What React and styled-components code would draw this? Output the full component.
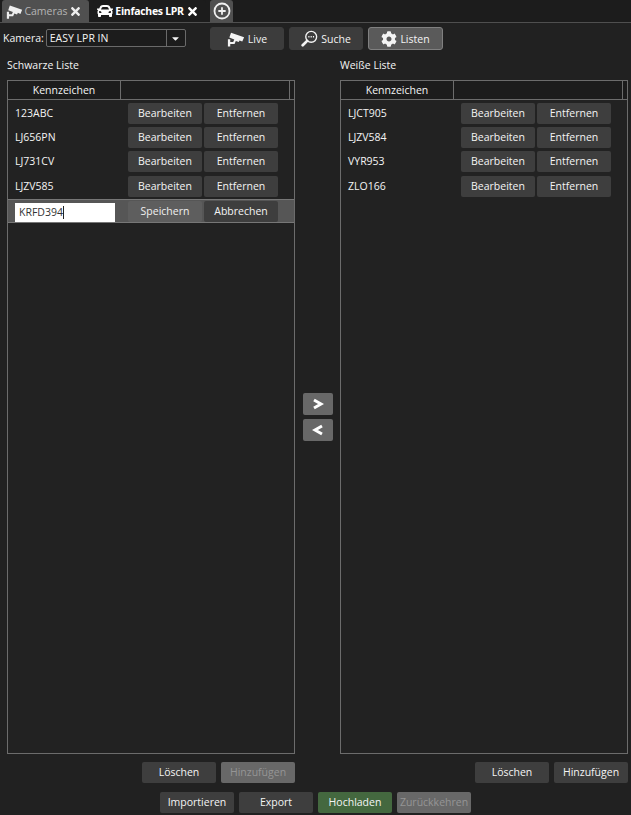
import React from 'react';
import styled, { createGlobalStyle } from 'styled-components';
import { FaCar, FaCog, FaTimes, FaCaretDown } from 'react-icons/fa';
import { CirclePlus } from 'lucide-react';

const GlobalStyle = createGlobalStyle`
  html, body {
    margin: 0;
    padding: 0;
    background: #212121;
  }
  body {
    font-family: 'Open Sans', 'Noto Sans', sans-serif;
    font-size: 10.5px;
    color: #f4f4f4;
  }
  * {
    box-sizing: border-box;
  }
`;

const CameraIcon = ({ size = 18 }) => (
  <svg width={size} height={size} viewBox='0 0 20 20' fill='currentColor'>
    <path d='M4.5 3 L19 8 L17 12.8 L14 11.6 L13 13.4 L9.8 12.3 L8.4 15.6 L3.6 15.6 L3.6 18.4 L1 18.4 L1 10.2 L3.6 10.2 L3.6 13.2 L6.9 13.2 L8.1 10.6 L2.6 8.4 Z' />
  </svg>
);

const SearchIcon = ({ size = 17 }) => (
  <svg width={size} height={size} viewBox='0 0 20 20' fill='none' stroke='currentColor'>
    <circle cx='12' cy='8' r='6.4' strokeWidth='1.6' />
    <path d='M7.2 12.8 L2 18' strokeWidth='3.2' strokeLinecap='round' />
    <path d='M8.6 8 H15.4' strokeWidth='1.8' strokeDasharray='1.4 1.3' />
  </svg>
);

const blackList = ['123ABC', 'LJ656PN', 'LJ731CV', 'LJZV585'];
const whiteList = ['LJCT905', 'LJZV584', 'VYR953', 'ZLO166'];

const ListPanel = ({ title, plates, editing, addDisabled }) => (
  <Column>
    <ColumnTitle>{title}</ColumnTitle>
    <Panel>
      <PanelHeader>
        <HeaderCell>Kennzeichen</HeaderCell>
        <HeaderFill />
        <HeaderStub />
      </PanelHeader>
      <Rows>
        {plates.map((plate) => (
          <Row key={plate}>
            <Plate>{plate}</Plate>
            <RowButtons>
              <Button>Bearbeiten</Button>
              <Button>Entfernen</Button>
            </RowButtons>
          </Row>
        ))}
        {editing && (
          <EditRow>
            <PlateInput>
              {editing}
              <Caret />
            </PlateInput>
            <RowButtons>
              <Button $variant='soft'>Speichern</Button>
              <Button>Abbrechen</Button>
            </RowButtons>
          </EditRow>
        )}
      </Rows>
    </Panel>
    <PanelFooter>
      <Button>Löschen</Button>
      <Button $variant={addDisabled ? 'disabled' : undefined}>Hinzufügen</Button>
    </PanelFooter>
  </Column>
);

const App = () => (
  <Page>
    <GlobalStyle />
    <TabBar>
      <Tab $width={87}>
        <CameraIcon size={17} />
        <TabLabel>Cameras</TabLabel>
        <FaTimes size={13} />
      </Tab>
      <Tab $active $width={113}>
        <FaCar size={16} />
        <TabLabel>Einfaches LPR</TabLabel>
        <FaTimes size={13} />
      </Tab>
      <AddTab>
        <CirclePlus size={18} strokeWidth={2.4} />
      </AddTab>
    </TabBar>

    <Toolbar>
      <CameraField>
        <span>Kamera:</span>
        <Select>
          <SelectValue>EASY LPR IN</SelectValue>
          <SelectArrow>
            <FaCaretDown size={11} />
          </SelectArrow>
        </Select>
      </CameraField>
      <ViewButtons>
        <ViewButton>
          <CameraIcon />
          Live
        </ViewButton>
        <ViewButton>
          <SearchIcon />
          Suche
        </ViewButton>
        <ViewButton $active>
          <FaCog size={16} />
          Listen
        </ViewButton>
      </ViewButtons>
    </Toolbar>

    <Lists>
      <ListPanel title='Schwarze Liste' plates={blackList} editing='KRFD394' addDisabled />
      <Transfer>
        <ArrowButton aria-label='nach rechts'>
          <Chevron viewBox='0 0 12 12'>
            <path d='M2 2 L9 6 L2 10' />
          </Chevron>
        </ArrowButton>
        <ArrowButton aria-label='nach links'>
          <Chevron viewBox='0 0 12 12'>
            <path d='M10 2 L3 6 L10 10' />
          </Chevron>
        </ArrowButton>
      </Transfer>
      <ListPanel title='Weiße Liste' plates={whiteList} />
    </Lists>

    <Actions>
      <Button>Importieren</Button>
      <Button>Export</Button>
      <Button $variant='green'>Hochladen</Button>
      <Button $variant='disabled'>Zurückkehren</Button>
    </Actions>
  </Page>
);

export default App;

const Page = styled.div`
  width: 631px;
  height: 815px;
  overflow: hidden;
  background: #212121;
`;

const TabBar = styled.div`
  height: 23px;
  padding-left: 2px;
  display: flex;
  align-items: flex-end;
  gap: 4px;
  background: #1c1c1c;
  border-bottom: 1px solid #4f4f4f;
`;

const Tab = styled.div`
  width: ${(p) => p.$width}px;
  height: 22px;
  padding: 0 7px 0 4px;
  display: flex;
  align-items: center;
  justify-content: space-between;
  border-radius: 3px 3px 0 0;
  background: ${(p) => (p.$active ? '#1c1c1c' : '#505050')};
  color: ${(p) => (p.$active ? '#fff' : '#b4b4b4')};
  font-weight: ${(p) => (p.$active ? 700 : 400)};
  letter-spacing: ${(p) => (p.$active ? '-0.3px' : '0')};

  svg {
    color: ${(p) => (p.$active ? '#fff' : '#eee')};
    flex-shrink: 0;
  }
`;

const TabLabel = styled.span`
  white-space: nowrap;
`;

const AddTab = styled.div`
  width: 23px;
  height: 22px;
  display: flex;
  align-items: center;
  justify-content: center;
  border-radius: 3px 3px 0 0;
  background: #505050;
  color: #f0f0f0;
`;

const Toolbar = styled.div`
  height: 27px;
  padding: 4px 0 0 3px;
  display: flex;
  align-items: flex-start;
`;

const CameraField = styled.div`
  width: 207px;
  height: 18px;
  margin-top: 2px;
  display: flex;
  align-items: center;
  gap: 2px;
`;

const Select = styled.div`
  width: 140px;
  height: 18px;
  display: flex;
  align-items: stretch;
  border: 1px solid #6a6a6a;
  border-radius: 2px;
  background: #1c1c1c;
`;

const SelectValue = styled.div`
  flex: 1;
  padding-left: 3px;
  line-height: 16px;
`;

const SelectArrow = styled.div`
  width: 19px;
  display: flex;
  align-items: center;
  justify-content: center;
  border-left: 1px solid #6a6a6a;
`;

const ViewButtons = styled.div`
  display: flex;
  gap: 5px;
`;

const ViewButton = styled.div`
  width: ${(p) => (p.$active ? '75px' : '74px')};
  height: 23px;
  display: flex;
  align-items: center;
  justify-content: center;
  gap: 3px;
  border-radius: 3px;
  background: ${(p) => (p.$active ? '#5a5a5a' : '#3c3c3c')};
  border: 1px solid ${(p) => (p.$active ? '#808080' : '#3c3c3c')};
`;

const Lists = styled.div`
  padding: 8px 3px 0 7px;
  display: grid;
  grid-template-columns: 288px 1fr 288px;
`;

const Column = styled.div`
  display: flex;
  flex-direction: column;
`;

const ColumnTitle = styled.div`
  height: 22px;
  line-height: 15px;
`;

const Panel = styled.div`
  height: 674px;
  border: 1px solid #6c6c6c;
  background: #222222;
`;

const PanelHeader = styled.div`
  height: 19px;
  display: flex;
  background: #1c1c1c;
  border-bottom: 1px solid #6c6c6c;
`;

const HeaderCell = styled.div`
  width: 113px;
  line-height: 18px;
  text-align: center;
  border-right: 1px solid #6c6c6c;
`;

const HeaderFill = styled.div`
  flex: 1;
`;

const HeaderStub = styled.div`
  width: 5px;
  border-left: 1px solid #6c6c6c;
`;

const Rows = styled.div`
  padding-top: 2.6px;
  display: flex;
  flex-direction: column;
`;

const Row = styled.div`
  height: 24.4px;
  padding-left: 7px;
  display: flex;
  align-items: flex-start;
`;

const EditRow = styled.div`
  height: 24px;
  margin-top: -1.6px;
  padding: 1px 0 0 7px;
  display: flex;
  align-items: flex-start;
  background: #565656;
  border-top: 1px solid #777;
  border-bottom: 1px solid #777;
`;

const Plate = styled.div`
  width: 113px;
  line-height: 20px;
`;

const PlateInput = styled.div`
  width: 100px;
  height: 19px;
  margin: 2px 13px 0 0;
  padding-left: 4px;
  display: flex;
  align-items: center;
  background: #ffffff;
  color: #333;
`;

const Caret = styled.span`
  width: 1px;
  height: 13px;
  background: #222;
`;

const RowButtons = styled.div`
  display: flex;
  gap: 2px;
`;

const buttonColours = {
  soft: { bg: '#5e5e5e', fg: '#f0f0f0' },
  disabled: { bg: '#686868', fg: '#959595' },
  green: { bg: '#44683f', fg: '#f4f4f4' },
};

const Button = styled.div`
  width: 74px;
  height: 21px;
  line-height: 21px;
  text-align: center;
  white-space: nowrap;
  border-radius: 2px;
  background: ${(p) => buttonColours[p.$variant]?.bg || '#3e3e3e'};
  color: ${(p) => buttonColours[p.$variant]?.fg || '#f4f4f4'};
`;

const PanelFooter = styled.div`
  margin-top: 8px;
  display: flex;
  justify-content: flex-end;
  gap: 5px;
`;

const Transfer = styled.div`
  padding-top: 335px;
  display: flex;
  flex-direction: column;
  align-items: center;
  gap: 4px;
`;

const ArrowButton = styled.div`
  width: 30px;
  height: 22px;
  display: flex;
  align-items: center;
  justify-content: center;
  border-radius: 2px;
  background: #686868;
`;

const Chevron = styled.svg`
  width: 12px;
  height: 12px;
  fill: none;
  stroke: #ffffff;
  stroke-width: 3;
`;

const Actions = styled.div`
  margin-top: 9px;
  padding-left: 160px;
  display: flex;
  gap: 5px;
`;
